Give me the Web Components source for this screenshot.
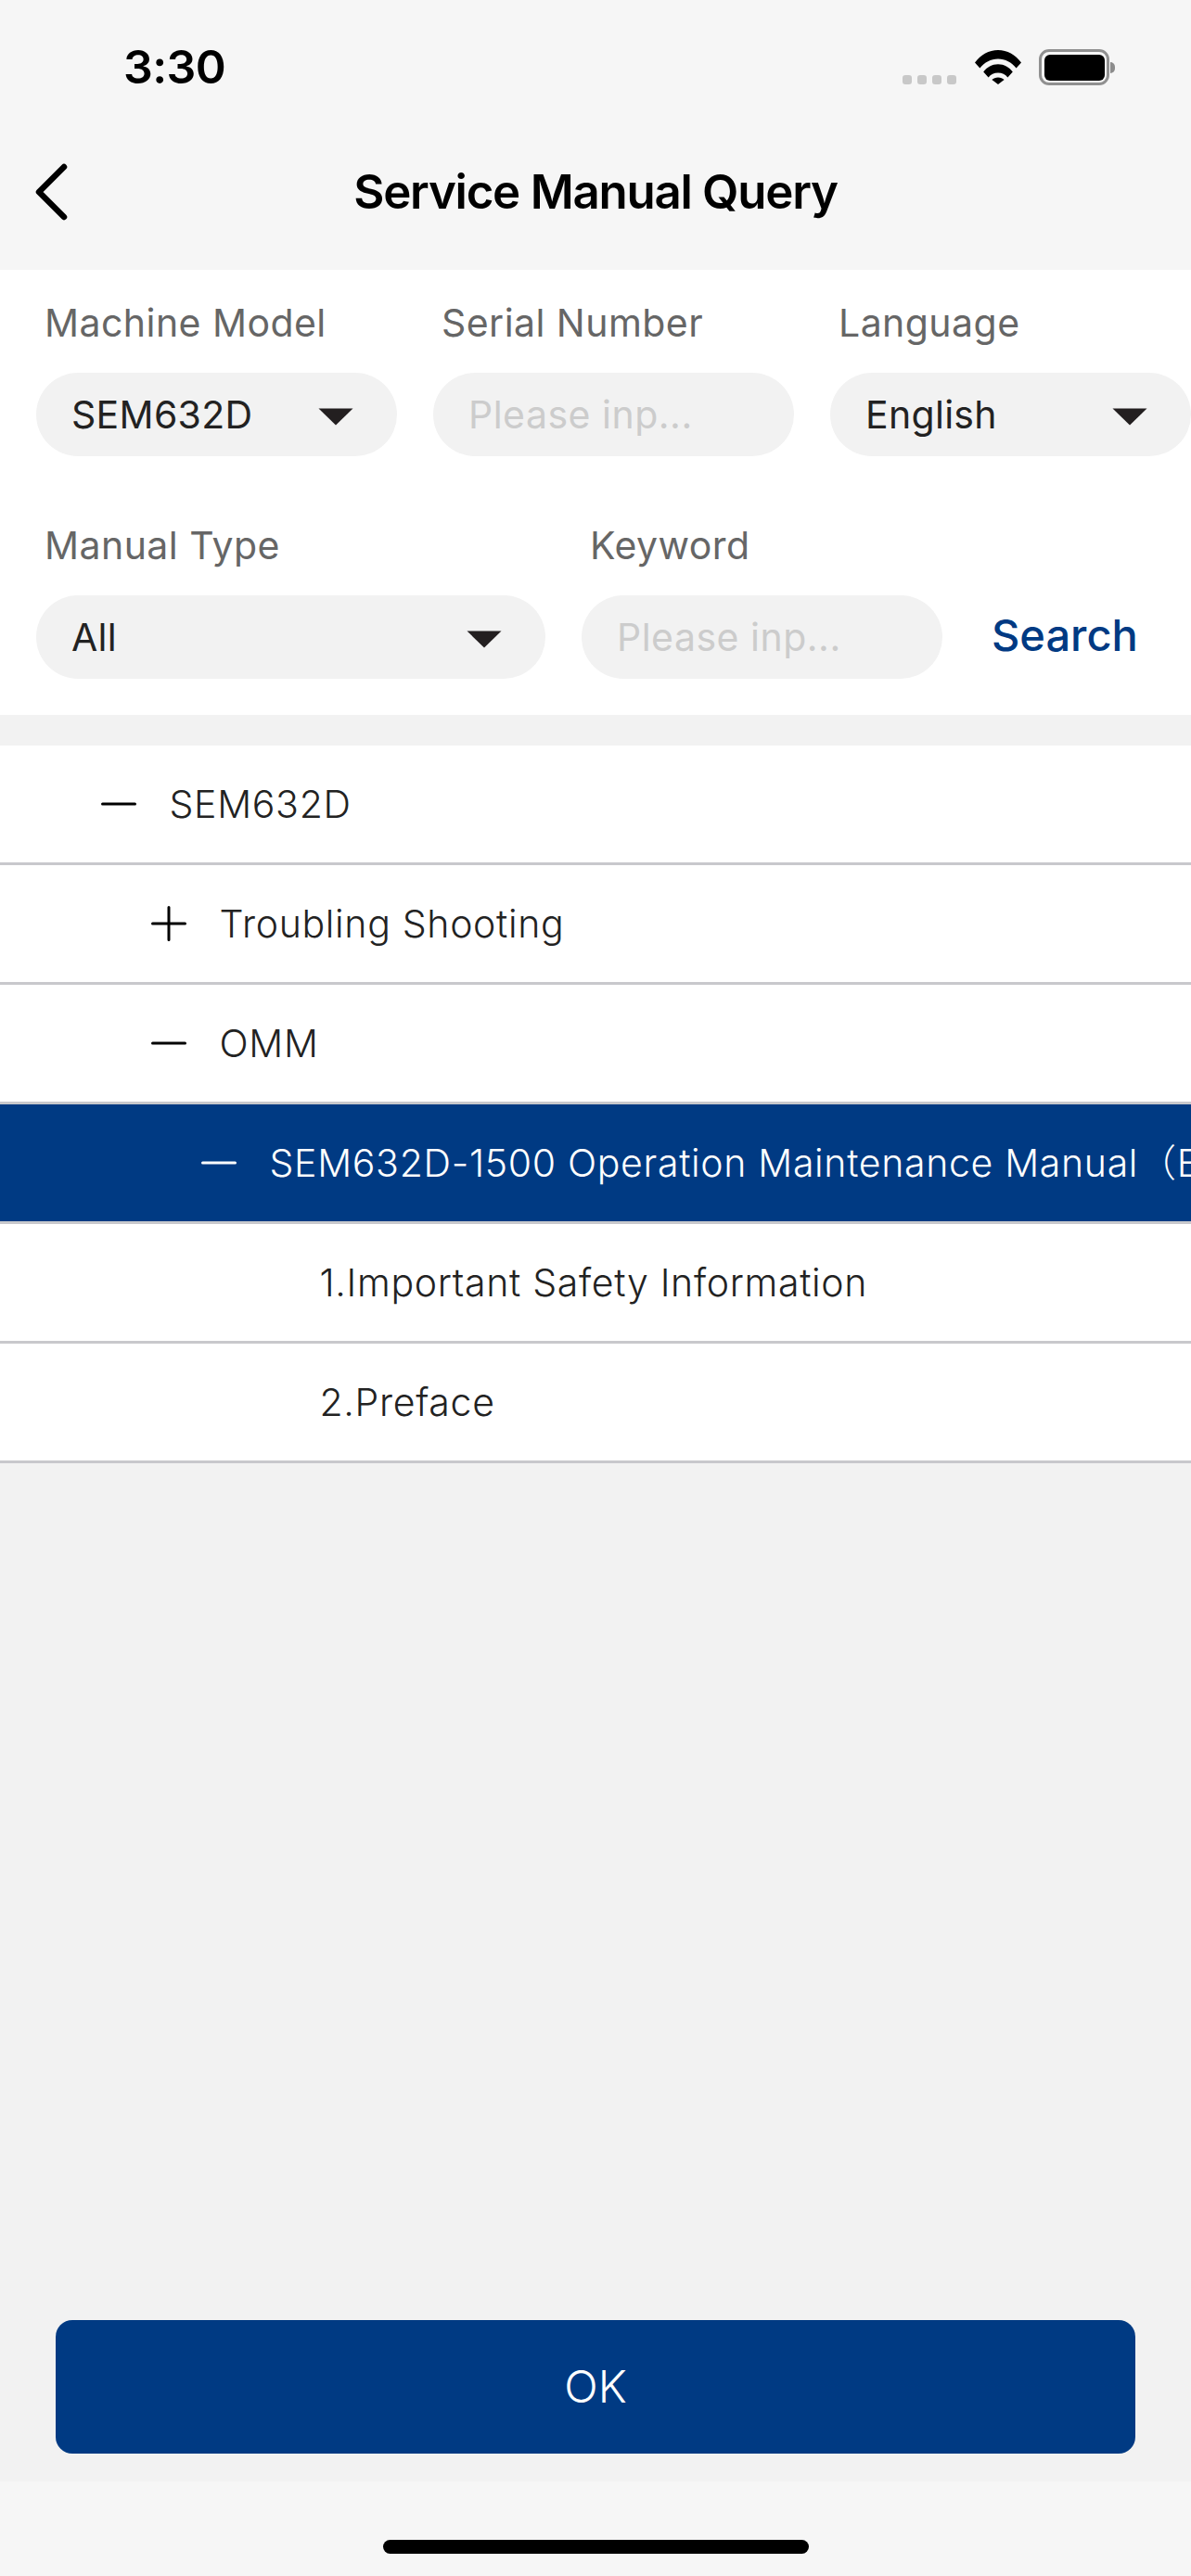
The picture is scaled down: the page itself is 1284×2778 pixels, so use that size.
<!DOCTYPE html>
<html lang="en">
<head>
<meta charset="utf-8">
<title>Service Manual Query</title>
<style>
    html, body {margin: 0; padding: 0;}
    body {
        width: 1284px;
        height: 2778px;
        display: flex;
        flex-direction: column;
        overflow: hidden;
        background: #f2f2f2;
        font-family: Inter, "Liberation Sans", "Noto Sans CJK SC", sans-serif;
        color: #222;
    }
</style>
</head>
<body>
<status-bar time="3:30"></status-bar>
<nav-header>Service Manual Query</nav-header>
<filter-form>
    <form-row>
        <form-field label="Machine Model" width="389"><select-pill>SEM632D</select-pill></form-field>
        <form-field label="Serial Number" width="389"><input-pill>Please inp...</input-pill></form-field>
        <form-field label="Language" width="389"><select-pill>English</select-pill></form-field>
    </form-row>
    <form-row>
        <form-field label="Manual Type" width="549"><select-pill>All</select-pill></form-field>
        <form-field label="Keyword" width="389"><input-pill>Please inp...</input-pill></form-field>
        <search-link>Search</search-link>
    </form-row>
</filter-form>
<tree-list>
    <tree-row level="0" icon="minus">SEM632D</tree-row>
    <tree-row level="1" icon="plus">Troubling Shooting</tree-row>
    <tree-row level="1" icon="minus">OMM</tree-row>
    <tree-row level="2" icon="minus" selected>SEM632D-1500 Operation Maintenance Manual（E</tree-row>
    <tree-row level="3">1.Important Safety Information</tree-row>
    <tree-row level="3">2.Preface</tree-row>
</tree-list>
<ok-button>OK</ok-button>
<home-bar></home-bar>

<script>
const arrowIcon = `<svg width="38" height="19" viewBox="0 0 38 19"><path d="M0.5 0.5H37.5L19 18.5Z" fill="#231f20"></path></svg>`;
const minusIcon = `<svg width="38" height="38" viewBox="0 0 38 38"><path d="M1.5 19H36.5" stroke="currentColor" stroke-width="3" stroke-linecap="round"></path></svg>`;
const plusIcon = `<svg width="38" height="38" viewBox="0 0 38 38"><path d="M1.5 19H36.5M19 1.5V36.5" stroke="currentColor" stroke-width="3" stroke-linecap="round"></path></svg>`;

class BaseElement extends HTMLElement {
    connectedCallback() {
        if (!this.shadowRoot) {
            let shadowRoot = this.attachShadow({mode: 'open'});
            shadowRoot.innerHTML = this.template;
        }
    }
}

class StatusBar extends BaseElement {
    get template() {
        return `
        <style>
            :host {display: flex; align-items: flex-start; justify-content: space-between; height: 123px; box-sizing: border-box;
                padding: 50px 82px 0 133px; background: #f6f6f6; color: #000;}
            .time {font-size: 50px; font-weight: 600; line-height: 45px; letter-spacing: -0.6px;}
            .icons {display: flex; align-items: flex-start; padding-top: 3px;}
            .dots {display: flex; gap: 6px; margin: 28px 20px 0 0;}
            .dots i {width: 10px; height: 10px; border-radius: 3px; background: #c8c8c8;}
            .wifi {display: block; margin: 1px 19px 0 0;}
            .battery {display: flex; align-items: center;}
            .cell {width: 76px; height: 39px; box-sizing: border-box; border: 3.5px solid #909090; border-radius: 11px; padding: 2.5px; background: #f6f6f6;}
            .cell b {display: block; height: 100%; background: #000; border-radius: 6px;}
            .tip {width: 5px; height: 12px; margin-left: 1px; background: #8c8c8c; border-radius: 0 6px 6px 0;}
        </style>
        <div class="time">${this.getAttribute('time')}</div>
        <div class="icons">
            <div class="dots"><i></i><i></i><i></i><i></i></div>
            <svg class="wifi" width="50" height="37" viewBox="0 0 50 37">
                <path d="M0 13.5C6.5 4.8 15 0 25 0S43.5 4.8 50 13.5L44.6 19.6C39.5 13.3 33 9.6 25 9.6S10.5 13.3 5.4 19.6Z"></path>
                <path d="M9.2 23.5C13 18.3 18.6 15.2 25 15.2S37 18.3 40.8 23.5L35.4 29.4C32.8 26.2 29.4 24.5 25 24.5S17.2 26.2 14.6 29.4Z"></path>
                <path d="M18.4 32C20 30.3 22.3 29.4 25 29.4S30 30.3 31.6 32L25 37Z"></path>
            </svg>
            <div class="battery"><div class="cell"><b></b></div><div class="tip"></div></div>
        </div>`;
    }
}

class NavHeader extends BaseElement {
    get template() {
        return `
        <style>
            :host {display: flex; align-items: center; justify-content: center; position: relative; height: 168px;
                background: #f6f6f6; color: #000;}
            .back {position: absolute; left: 37px; top: 53px;}
            .title {font-size: 51px; font-weight: 600; letter-spacing: -1.25px; padding-bottom: 1px;}
        </style>
        <svg class="back" width="38" height="62" viewBox="0 0 38 62"><path d="M32 4L5 31L32 58" fill="none" stroke="#000" stroke-width="6.5" stroke-linecap="round" stroke-linejoin="round"></path></svg>
        <div class="title"><slot></slot></div>`;
    }
}

class FilterForm extends BaseElement {
    get template() {
        return `
        <style>
            :host {display: flex; flex-direction: column; gap: 67px; padding: 28px 0 39px 39px; background: #fff;}
        </style>
        <slot></slot>`;
    }
}

class FormRow extends BaseElement {
    get template() {
        return `
        <style>
            :host {display: flex; gap: 39px; align-items: flex-end;}
        </style>
        <slot></slot>`;
    }
}

class FormField extends BaseElement {
    get template() {
        return `
        <style>
            :host {display: block; flex: 0 0 ${this.getAttribute('width')}px;}
            .label {height: 56px; line-height: 58px; margin: 0 0 27px 9px; font-size: 41px; color: #666; letter-spacing: 0.45px;}
        </style>
        <div class="label">${this.getAttribute('label')}</div>
        <slot></slot>`;
    }
}

class SelectPill extends BaseElement {
    get template() {
        return `
        <style>
            :host {display: flex; align-items: center; justify-content: space-between; height: 90px; box-sizing: border-box;
                padding: 0 47px 0 38px; border-radius: 45px; background: #f2f2f2; color: #222; font-size: 41px; font-weight: 400; letter-spacing: 0.3px;}
            svg {display: block; margin-top: 4px;}
        </style>
        <span><slot></slot></span>${arrowIcon}`;
    }
}

class InputPill extends BaseElement {
    get template() {
        return `
        <style>
            :host {display: flex; align-items: center; height: 90px; box-sizing: border-box; padding: 0 38px;
                border-radius: 45px; background: #f2f2f2; color: #ccc; font-size: 41px; letter-spacing: 0.5px;}
        </style>
        <slot></slot>`;
    }
}

class SearchLink extends BaseElement {
    get template() {
        return `
        <style>
            :host {display: flex; align-items: center; height: 84px; margin: 0 0 6px 14px; color: #003a83; font-size: 47px; font-weight: 500;}
        </style>
        <slot></slot>`;
    }
}

class TreeList extends BaseElement {
    get template() {
        return `
        <style>
            :host {display: block; margin-top: 33px; background: #fff;}
        </style>
        <slot></slot>`;
    }
}

class TreeRow extends BaseElement {
    get template() {
        let level = Number(this.getAttribute('level')) || 0;
        let icon = this.getAttribute('icon');
        let selected = this.hasAttribute('selected');
        return `
        <style>
            :host {display: flex; align-items: center; gap: 35.5px; height: 129px; box-sizing: border-box;
                padding-left: ${109 + level * 54}px; border-bottom: 3px solid #c8c8cc; overflow: hidden; white-space: nowrap;
                background: ${selected ? '#003a83' : '#fff'}; color: ${selected ? '#fff' : '#222'};
                font-size: 41px; font-weight: 300; letter-spacing: 0.68px;}
            .icon {flex: none; width: 38px; height: 38px; color: ${selected ? '#fff' : '#000'};}
            .text {line-height: 50px; height: 50px;}
            svg {display: block;}
        </style>
        <div class="icon">${icon === 'plus' ? plusIcon : icon === 'minus' ? minusIcon : ''}</div>
        <div class="text"><slot></slot></div>`;
    }
}

class OkButton extends BaseElement {
    get template() {
        return `
        <style>
            :host {display: flex; align-items: center; justify-content: center; height: 144px; box-sizing: border-box; padding-bottom: 2px; margin: auto 60px 30px;
                border-radius: 18px; background: #003a83; color: #fff; font-size: 48px; font-weight: 300;}
        </style>
        <slot></slot>`;
    }
}

class HomeBar extends BaseElement {
    get template() {
        return `
        <style>
            :host {display: flex; justify-content: center; height: 102px; box-sizing: border-box; padding-top: 63px; background: #f6f6f6;}
            .bar {width: 459px; height: 15px; border-radius: 8px; background: #000;}
        </style>
        <div class="bar"></div>`;
    }
}

window.customElements.define('status-bar', StatusBar);
window.customElements.define('nav-header', NavHeader);
window.customElements.define('filter-form', FilterForm);
window.customElements.define('form-row', FormRow);
window.customElements.define('form-field', FormField);
window.customElements.define('select-pill', SelectPill);
window.customElements.define('input-pill', InputPill);
window.customElements.define('search-link', SearchLink);
window.customElements.define('tree-list', TreeList);
window.customElements.define('tree-row', TreeRow);
window.customElements.define('ok-button', OkButton);
window.customElements.define('home-bar', HomeBar);
</script>
</body>
</html>
